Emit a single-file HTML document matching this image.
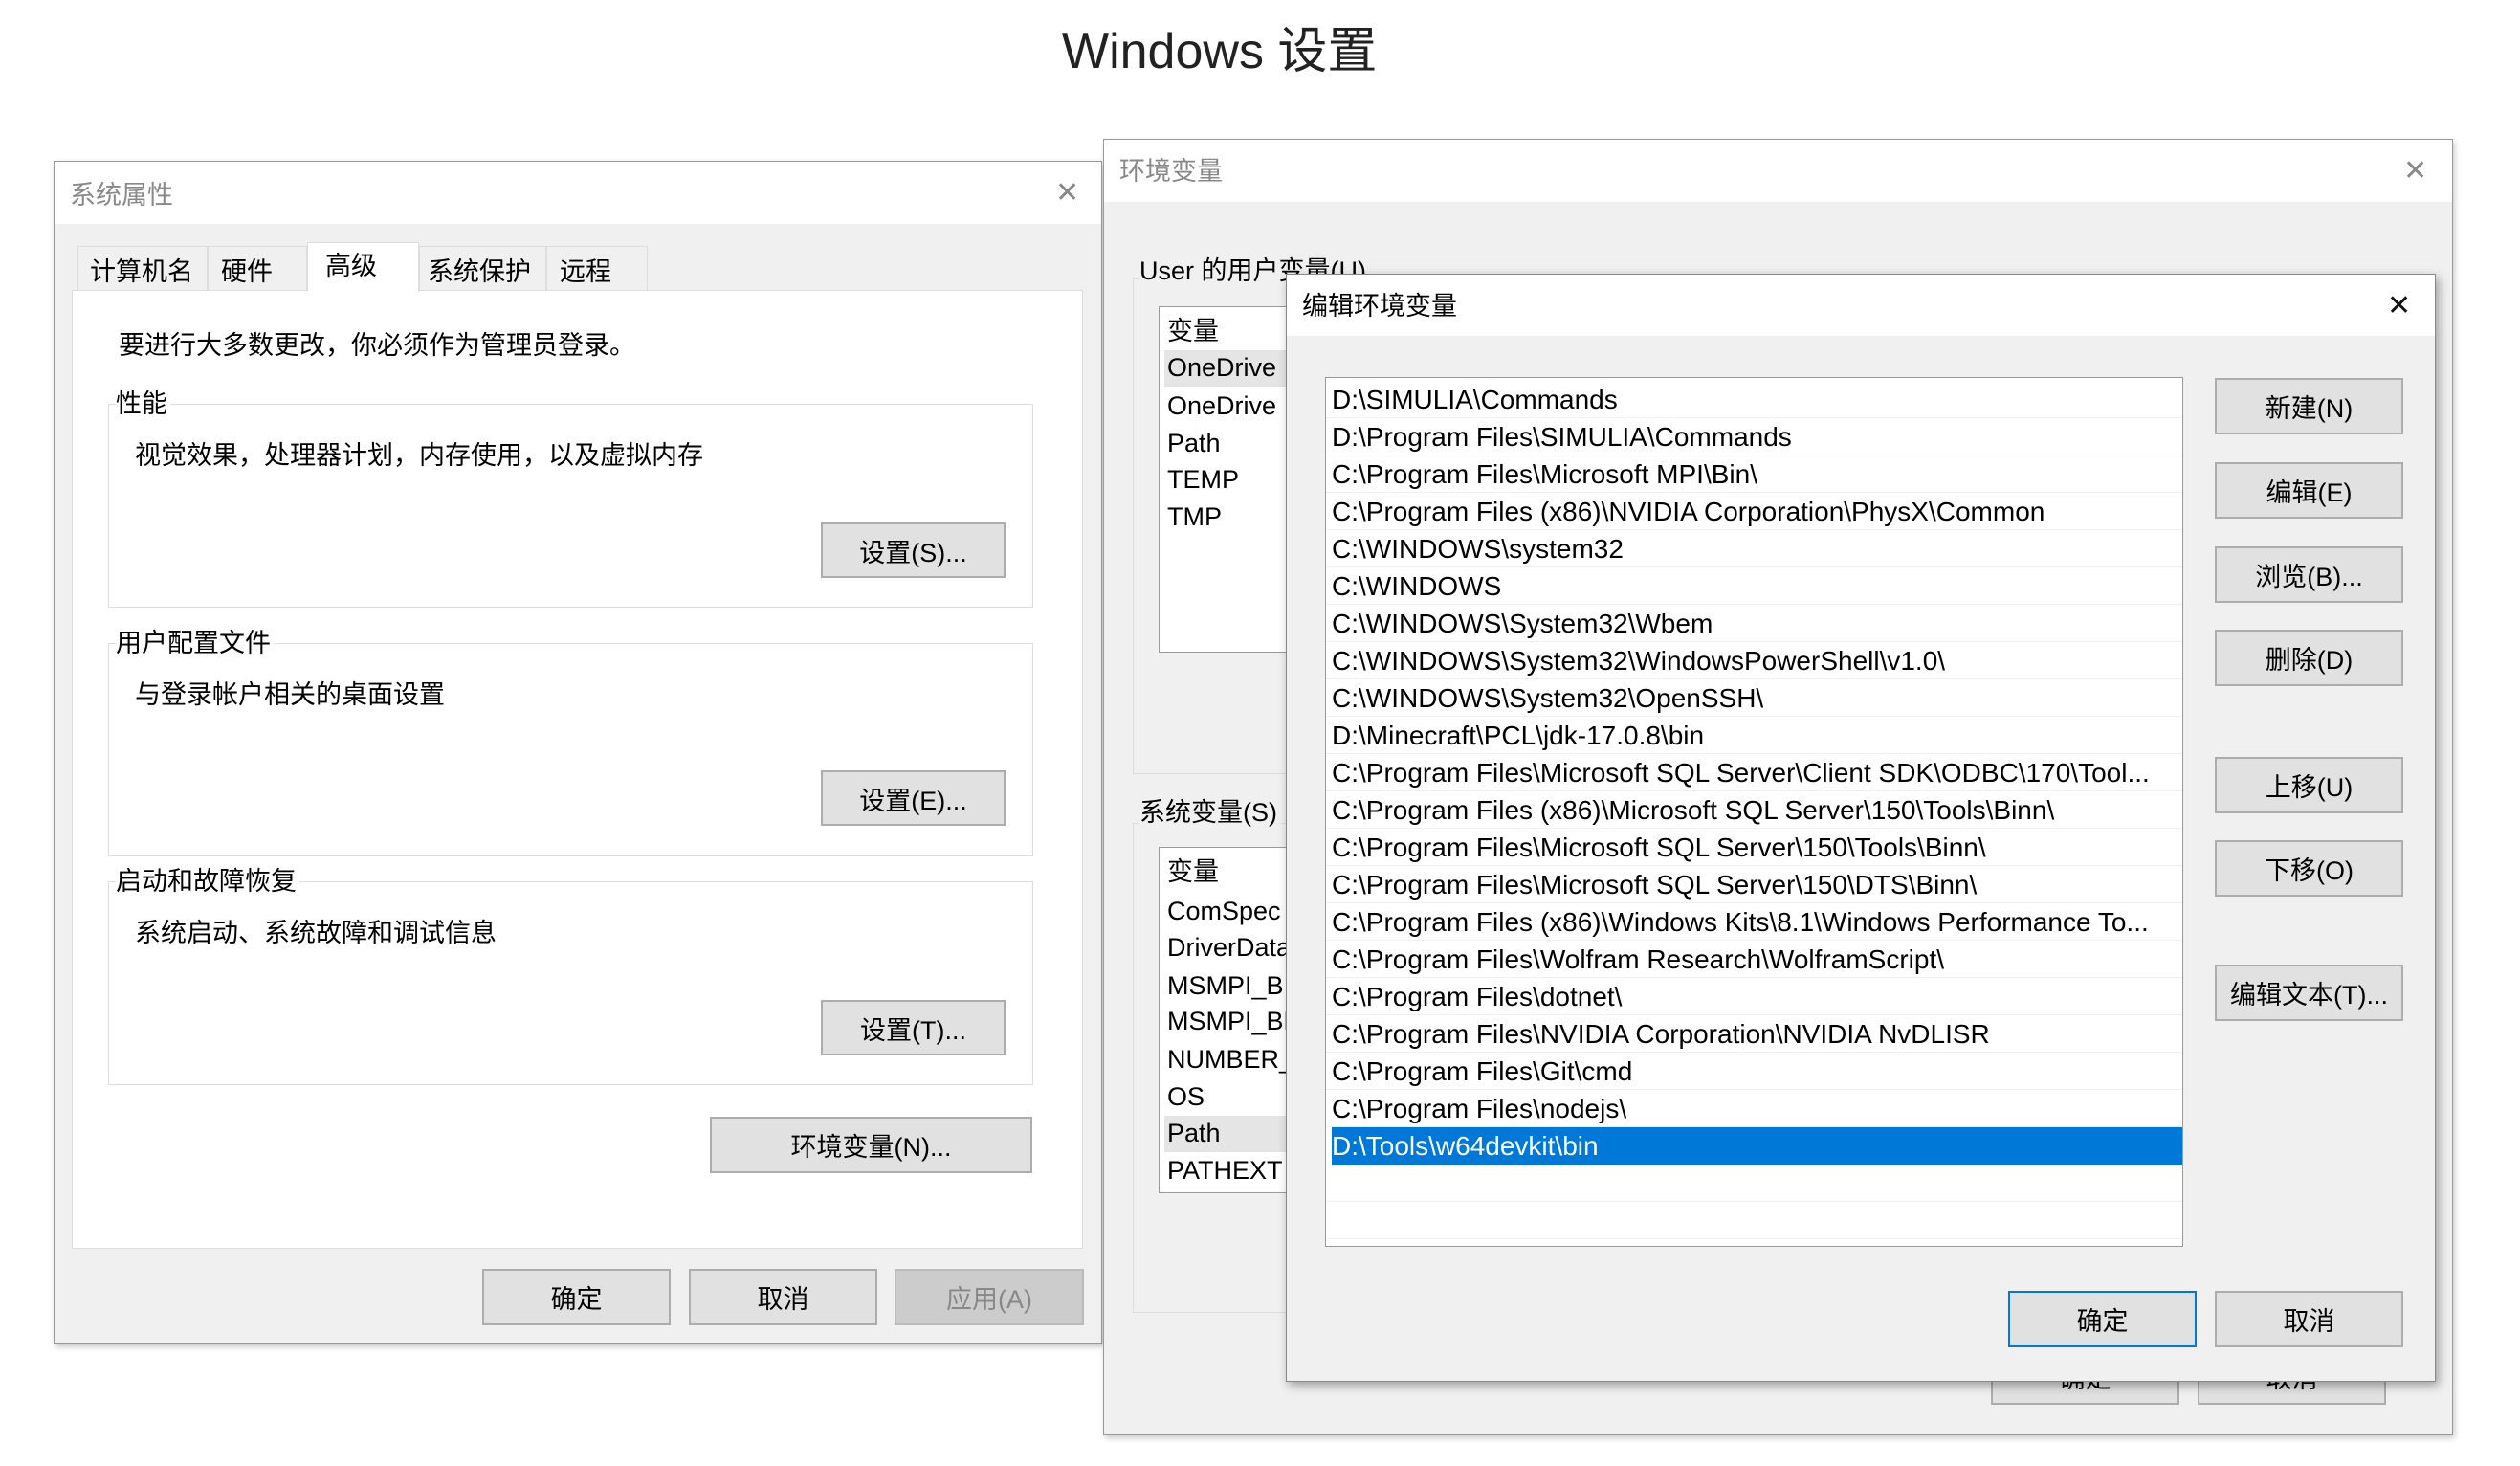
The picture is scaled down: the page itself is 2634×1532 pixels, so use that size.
<!DOCTYPE html>
<html><head><meta charset="utf-8"><style>
*{margin:0;padding:0;box-sizing:border-box}
body{width:2634px;height:1532px;background:#fff;position:relative;overflow:hidden;font-family:"Liberation Sans","Noto Sans CJK SC",sans-serif;color:#000}
.a{position:absolute}
.t{position:absolute;white-space:nowrap;font-size:27px;line-height:1}
.btn{position:absolute;background:#e1e1e1;border:2px solid #adadad;font-size:27px;display:flex;align-items:center;justify-content:center;white-space:nowrap}
.row{position:absolute;left:0;right:0;height:39px;border-bottom:1px solid #f0f0f0;font-size:28px;line-height:39px;padding-left:6px;white-space:nowrap}
.x{position:absolute;font-size:30px;color:#555;line-height:1}
</style></head><body>
<div class="t" style="left:1110px;top:28px;font-size:52px;color:#222">Windows 设置</div>

<!-- System properties -->
<div class="a" style="left:890px;top:168px;width:262px;height:3px;background:#777"></div>
<div class="a" style="left:56px;top:168px;width:1096px;height:1236px;background:#f0f0f0;border:1px solid #999;box-shadow:2px 3px 6px rgba(0,0,0,.25)">
  <div class="a" style="left:0;top:0;right:0;height:65px;background:#fff"></div>
  <div class="t" style="left:16px;top:22px;color:#888">系统属性</div>
  <div class="x" style="left:1046px;top:18px;color:#888">✕</div>
  <div class="a" style="left:24px;top:88px;width:136px;height:47px;border:1px solid #ddd;border-bottom:none;background:#f0f0f0"></div>
  <div class="a" style="left:160px;top:88px;width:104px;height:47px;border:1px solid #ddd;border-bottom:none;background:#f0f0f0"></div>
  <div class="a" style="left:381px;top:88px;width:133px;height:47px;border:1px solid #ddd;border-bottom:none;background:#f0f0f0"></div>
  <div class="a" style="left:514px;top:88px;width:106px;height:47px;border:1px solid #ddd;border-bottom:none;background:#f0f0f0"></div>
  <div class="a" style="left:18px;top:134px;width:1057px;height:1002px;background:#fff;border:1px solid #ddd"></div>
  <div class="a" style="left:264px;top:84px;width:117px;height:52px;background:#fff;border:1px solid #ddd;border-bottom:none"></div>
  <div class="t" style="left:37px;top:102px">计算机名</div>
  <div class="t" style="left:174px;top:102px">硬件</div>
  <div class="t" style="left:283px;top:96px">高级</div>
  <div class="t" style="left:390px;top:102px">系统保护</div>
  <div class="t" style="left:528px;top:102px">远程</div>
  <div class="t" style="left:67px;top:179px">要进行大多数更改，你必须作为管理员登录。</div>
  <div class="a" style="left:56px;top:253px;width:967px;height:213px;border:1px solid #ddd"></div>
  <div class="t" style="left:64px;top:240px;background:#fff;padding-right:3px">性能</div>
  <div class="t" style="left:84px;top:294px">视觉效果，处理器计划，内存使用，以及虚拟内存</div>
  <div class="btn" style="left:801px;top:377px;width:193px;height:58px">设置(S)...</div>
  <div class="a" style="left:56px;top:503px;width:967px;height:223px;border:1px solid #ddd"></div>
  <div class="t" style="left:64px;top:490px;background:#fff;padding-right:3px">用户配置文件</div>
  <div class="t" style="left:84px;top:544px">与登录帐户相关的桌面设置</div>
  <div class="btn" style="left:801px;top:636px;width:193px;height:58px">设置(E)...</div>
  <div class="a" style="left:56px;top:752px;width:967px;height:213px;border:1px solid #ddd"></div>
  <div class="t" style="left:64px;top:739px;background:#fff;padding-right:3px">启动和故障恢复</div>
  <div class="t" style="left:84px;top:793px">系统启动、系统故障和调试信息</div>
  <div class="btn" style="left:801px;top:876px;width:193px;height:58px">设置(T)...</div>
  <div class="btn" style="left:685px;top:998px;width:337px;height:59px">环境变量(N)...</div>
  <div class="btn" style="left:447px;top:1157px;width:197px;height:59px">确定</div>
  <div class="btn" style="left:663px;top:1157px;width:197px;height:59px">取消</div>
  <div class="btn" style="left:878px;top:1157px;width:198px;height:59px;background:#ccc;border-color:#bbb;color:#888">应用(A)</div>
</div>

<!-- Env variables -->
<div class="a" style="left:1153px;top:145px;width:1411px;height:1355px;background:#f0f0f0;border:1px solid #999;box-shadow:2px 3px 6px rgba(0,0,0,.2)">
  <div class="a" style="left:0;top:0;right:0;height:65px;background:#fff"></div>
  <div class="t" style="left:16px;top:20px;color:#888">环境变量</div>
  <div class="x" style="left:1358px;top:18px;color:#888">✕</div>
  <div class="a" style="left:30px;top:145px;width:1360px;height:518px;border:1px solid #ddd"></div>
  <div class="t" style="left:37px;top:124px;background:#f0f0f0;padding-right:3px">User 的用户变量(U)</div>
  <div class="a" style="left:57px;top:174px;width:300px;height:362px;background:#fff;border:1px solid #999">
    <div class="t" style="left:8px;top:12px">变量</div>
    <div class="a" style="left:5px;top:45px;right:0;height:38px;background:#e5e5e5"></div>
    <div class="t" style="left:8px;top:50px">OneDrive</div>
    <div class="t" style="left:8px;top:90px">OneDrive</div>
    <div class="t" style="left:8px;top:129px">Path</div>
    <div class="t" style="left:8px;top:167px">TEMP</div>
    <div class="t" style="left:8px;top:206px">TMP</div>
  </div>
  <div class="a" style="left:30px;top:714px;width:1360px;height:512px;border:1px solid #ddd"></div>
  <div class="t" style="left:37px;top:690px;background:#f0f0f0;padding-right:3px">系统变量(S)</div>
  <div class="a" style="left:57px;top:739px;width:300px;height:362px;background:#fff;border:1px solid #999">
    <div class="t" style="left:8px;top:12px">变量</div>
    <div class="t" style="left:8px;top:53px">ComSpec</div>
    <div class="t" style="left:8px;top:91px">DriverData</div>
    <div class="t" style="left:8px;top:131px">MSMPI_BIN</div>
    <div class="t" style="left:8px;top:168px">MSMPI_BENCH</div>
    <div class="t" style="left:8px;top:208px">NUMBER_</div>
    <div class="t" style="left:8px;top:247px">OS</div>
    <div class="a" style="left:5px;top:280px;right:0;height:38px;background:#e5e5e5"></div>
    <div class="t" style="left:8px;top:285px">Path</div>
    <div class="t" style="left:8px;top:324px">PATHEXT</div>
  </div>
  <div class="btn" style="left:927px;top:1262px;width:197px;height:60px">确定</div>
  <div class="btn" style="left:1143px;top:1262px;width:197px;height:60px">取消</div>
</div>

<!-- Edit env -->
<div class="a" style="left:1344px;top:286px;width:1202px;height:1158px;background:#f0f0f0;border:1px solid #888;box-shadow:3px 4px 10px rgba(0,0,0,.35)">
  <div class="a" style="left:0;top:0;right:0;height:64px;background:#fff"></div>
  <div class="t" style="left:16px;top:20px">编辑环境变量</div>
  <div class="x" style="left:1150px;top:18px;color:#111">✕</div>
  <div class="a" style="left:40px;top:107px;width:897px;height:909px;background:#fff;border:1px solid #999;overflow:hidden">
    <div style="position:relative;top:3px;height:900px">
      <div class="row" style="top:0">D:\SIMULIA\Commands</div>
      <div class="row" style="top:39px">D:\Program Files\SIMULIA\Commands</div>
      <div class="row" style="top:78px">C:\Program Files\Microsoft MPI\Bin\</div>
      <div class="row" style="top:117px">C:\Program Files (x86)\NVIDIA Corporation\PhysX\Common</div>
      <div class="row" style="top:156px">C:\WINDOWS\system32</div>
      <div class="row" style="top:195px">C:\WINDOWS</div>
      <div class="row" style="top:234px">C:\WINDOWS\System32\Wbem</div>
      <div class="row" style="top:273px">C:\WINDOWS\System32\WindowsPowerShell\v1.0\</div>
      <div class="row" style="top:312px">C:\WINDOWS\System32\OpenSSH\</div>
      <div class="row" style="top:351px">D:\Minecraft\PCL\jdk-17.0.8\bin</div>
      <div class="row" style="top:390px">C:\Program Files\Microsoft SQL Server\Client SDK\ODBC\170\Tool...</div>
      <div class="row" style="top:429px">C:\Program Files (x86)\Microsoft SQL Server\150\Tools\Binn\</div>
      <div class="row" style="top:468px">C:\Program Files\Microsoft SQL Server\150\Tools\Binn\</div>
      <div class="row" style="top:507px">C:\Program Files\Microsoft SQL Server\150\DTS\Binn\</div>
      <div class="row" style="top:546px">C:\Program Files (x86)\Windows Kits\8.1\Windows Performance To...</div>
      <div class="row" style="top:585px">C:\Program Files\Wolfram Research\WolframScript\</div>
      <div class="row" style="top:624px">C:\Program Files\dotnet\</div>
      <div class="row" style="top:663px">C:\Program Files\NVIDIA Corporation\NVIDIA NvDLISR</div>
      <div class="row" style="top:702px">C:\Program Files\Git\cmd</div>
      <div class="row" style="top:741px">C:\Program Files\nodejs\</div>
      <div class="row" style="top:780px;left:6px;background:#0078d7;color:#fff;padding-left:0;border:none">D:\Tools\w64devkit\bin</div>
      <div class="row" style="top:819px"></div>
      <div class="row" style="top:858px"></div>
    </div>
  </div>
  <div class="btn" style="left:970px;top:108px;width:197px;height:59px">新建(N)</div>
  <div class="btn" style="left:970px;top:196px;width:197px;height:59px">编辑(E)</div>
  <div class="btn" style="left:970px;top:284px;width:197px;height:59px">浏览(B)...</div>
  <div class="btn" style="left:970px;top:371px;width:197px;height:59px">删除(D)</div>
  <div class="btn" style="left:970px;top:504px;width:197px;height:59px">上移(U)</div>
  <div class="btn" style="left:970px;top:591px;width:197px;height:59px">下移(O)</div>
  <div class="btn" style="left:970px;top:721px;width:197px;height:59px">编辑文本(T)...</div>
  <div class="btn" style="left:754px;top:1062px;width:197px;height:59px;border-color:#0078d7">确定</div>
  <div class="btn" style="left:970px;top:1062px;width:197px;height:59px">取消</div>
</div>
</body></html>
